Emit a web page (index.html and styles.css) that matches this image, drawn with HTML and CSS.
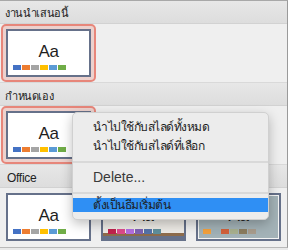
FILE: index.html
```html
<!DOCTYPE html>
<html lang="th">

<head>
  <meta charset="UTF-8">
  <meta name="viewport" content="width=device-width, initial-scale=1.0">
  <title>ธีม</title>
  <link rel="stylesheet" href="styles.css">
</head>

<body>
  <div class="panel">
    <div class="group-head">งานนำเสนอนี้</div>
    <div class="group">
      <div class="slot is-selected">
        <div class="theme theme-office">
          <span class="theme-aa">Aa</span>
          <div class="swatches"><i></i><i></i><i></i><i></i><i></i><i></i></div>
        </div>
      </div>
    </div>

    <div class="group-head">กำหนดเอง</div>
    <div class="group">
      <div class="slot is-selected">
        <div class="theme theme-office">
          <span class="theme-aa">Aa</span>
          <div class="swatches"><i></i><i></i><i></i><i></i><i></i><i></i></div>
        </div>
      </div>
    </div>

    <div class="group-head latin">Office</div>
    <div class="group group-last">
      <div class="slot">
        <div class="theme theme-office">
          <span class="theme-aa">Aa</span>
          <div class="swatches"><i></i><i></i><i></i><i></i><i></i><i></i></div>
        </div>
      </div>
      <div class="slot">
        <div class="theme theme-wood">
          <span class="theme-aa">Aa</span>
          <div class="swatches"><i></i><i></i><i></i><i></i><i></i><i></i></div>
        </div>
      </div>
      <div class="slot">
        <div class="theme theme-slate">
          <span class="theme-aa">Aa</span>
          <div class="swatches"><i></i><i></i><i></i><i></i><i></i><i></i></div>
        </div>
      </div>
    </div>

    <!-- เมนูคลิกขวาบนธีมที่กำหนดเอง -->
    <ul class="context-menu">
      <li class="menu-item">นำไปใช้กับสไลด์ทั้งหมด</li>
      <li class="menu-item">นำไปใช้กับสไลด์ที่เลือก</li>
      <li class="menu-sep"></li>
      <li class="menu-item latin">Delete...</li>
      <li class="menu-sep"></li>
      <li class="menu-item is-active">ตั้งเป็นธีมเริ่มต้น</li>
    </ul>
  </div>
</body>

</html>
```

FILE: styles.css
```css
* {
  box-sizing: border-box;
}

body {
  margin: 0;
  padding: 0;
  width: 288px;
  height: 250px;
  background-color: #e9e9e9;
  font-family: "Liberation Sans", "Noto Sans", sans-serif;
  color: #222;
  overflow: hidden;
}

.panel {
  position: relative;
  display: flex;
  flex-direction: column;
  width: 288px;
  height: 248px;
  background-color: #efefef;
  border-top: 1px solid #a8a8a8;
  border-right: 1px solid #9a9a9a;
  border-bottom: 1px solid #b8b8b8;
}

.group-head {
  height: 23px;
  padding: 4px 0 0 5px;
  font-size: 11px;
  line-height: 16px;
  letter-spacing: -0.4px;
  background-image: linear-gradient(to bottom, #e7e7e7 0%, #dddddd 100%);
  border-bottom: 1px solid #d2d2d2;
}

.group + .group-head {
  height: 24px;
  border-top: 1px solid #d9d9d9;
  padding-top: 5px;
}

.group-head.latin {
  padding-left: 7px;
  font-size: 12px;
  letter-spacing: -0.3px;
}

.group {
  display: flex;
  height: 58px;
  padding-left: 1px;
}

.group-last {
  flex: 1;
}

.slot {
  width: 95px;
  height: 58px;
  padding: 3px;
  border: 2px solid transparent;
  border-radius: 5px;
}

.slot.is-selected {
  border-color: #e7867a;
  background-color: #ecd1cd;
}

.theme {
  position: relative;
  display: flex;
  flex-direction: column;
  align-items: center;
  width: 85px;
  height: 48px;
  padding-top: 12px;
  background-color: #fff;
  border: 2px solid #66718a;
  overflow: hidden;
}

.theme-aa {
  font-size: 17px;
  line-height: 17px;
  letter-spacing: -0.5px;
  color: #1e1e1e;
}

.swatches {
  display: flex;
  gap: 1px;
  align-self: flex-start;
  margin: 5px 0 0 5px;
}

.swatches i {
  display: block;
  width: 8px;
  height: 5px;
}

.theme-office .swatches i:nth-child(1) { background-color: #4472c4; }
.theme-office .swatches i:nth-child(2) { background-color: #ed7d31; }
.theme-office .swatches i:nth-child(3) { background-color: #a5a5a5; }
.theme-office .swatches i:nth-child(4) { background-color: #ffc000; }
.theme-office .swatches i:nth-child(5) { background-color: #5b9bd5; }
.theme-office .swatches i:nth-child(6) { background-color: #70ad47; }

.theme-wood {
  background-color: #eeebe6;
  border-bottom: 5px solid #66718a;
  box-shadow: inset 0 -3px 0 #8e6c4c;
}

.theme-wood .swatches i:nth-child(1) { background-color: #c0224c; }
.theme-wood .swatches i:nth-child(2) { background-color: #de4a8c; }
.theme-wood .swatches i:nth-child(3) { background-color: #b46ee0; }
.theme-wood .swatches i:nth-child(4) { background-color: #7e62b2; }
.theme-wood .swatches i:nth-child(5) { background-color: #5472a8; }
.theme-wood .swatches i:nth-child(6) { background-color: #5f8f9c; }

.theme-slate {
  background-color: #a3b2b7;
  box-shadow: inset 0 0 0 1px #f4f4f4;
}

.theme-slate .swatches i:nth-child(1) { background-color: #f2a03c; }
.theme-slate .swatches i:nth-child(2) { background-color: #9fb0b6; }
.theme-slate .swatches i:nth-child(3) { background-color: #d2603a; }
.theme-slate .swatches i:nth-child(4) { background-color: #a8b08e; }
.theme-slate .swatches i:nth-child(5) { background-color: #8a7b5e; }
.theme-slate .swatches i:nth-child(6) { background-color: #a89c8d; }

.context-menu {
  position: absolute;
  left: 72px;
  top: 111px;
  width: 197px;
  margin: 0;
  padding: 5px 0 7px;
  list-style: none;
  background-color: #ececec;
  border: 1px solid #d0d0d0;
  border-radius: 5px;
  box-shadow: 0 4px 12px rgba(0, 0, 0, 0.25);
}

.menu-item {
  height: 19px;
  padding-left: 20px;
  font-size: 12px;
  line-height: 19px;
  letter-spacing: -0.5px;
  color: #1d1d1d;
  white-space: nowrap;
}

.menu-item.latin {
  height: 20px;
  line-height: 20px;
  font-size: 14px;
  letter-spacing: 0;
  color: #3a3a3a;
}

.menu-item.is-active {
  height: 14px;
  margin-top: 1px;
  line-height: 15px;
  background-color: #2f8ff4;
}

.menu-sep {
  height: 2px;
  margin: 5px 0 4px;
  background-color: #d9d9d9;
}
```
